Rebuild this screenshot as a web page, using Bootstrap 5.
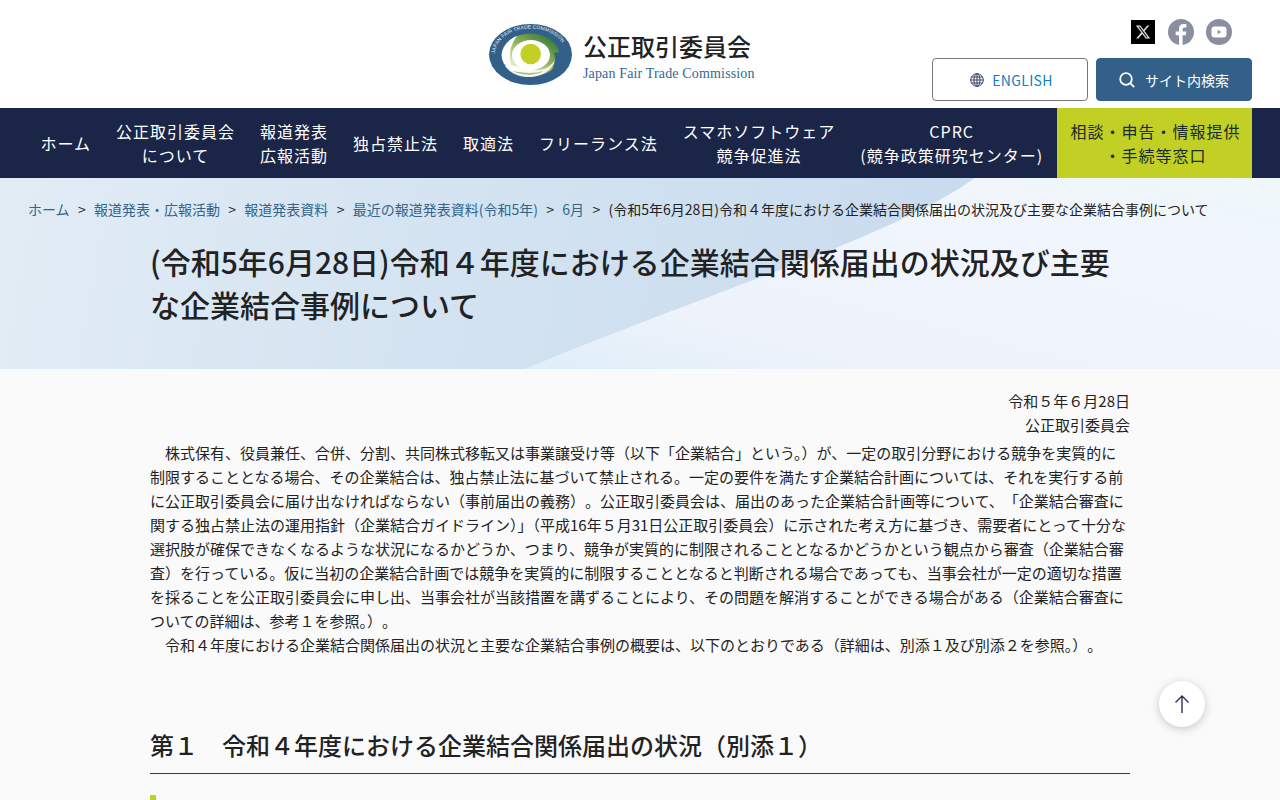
<!DOCTYPE html>
<html lang="ja">
<head>
<meta charset="utf-8">
<title>公正取引委員会</title>
<link rel="stylesheet" href="https://cdn.jsdelivr.net/npm/bootstrap@5.3.0/dist/css/bootstrap.min.css">
<style>
body{font-family:"Noto Sans CJK JP","Noto Sans",sans-serif;background:#fafafa;color:#222;font-size:15px;line-height:24px}
.jf-gap-r{margin-right:.5em}
.jf-gap-l{margin-left:.5em}
.jf-head{height:108px;background:#fff;padding:0 28px 0 489px}
.jf-logo{padding-top:24px;gap:11px;text-decoration:none}
.jf-logo svg{width:83px;height:61px;flex:none}
.jf-logo-ja{font-size:24px;font-weight:500;line-height:30px;color:#222;margin-top:7px}
.jf-logo-en{font-family:"Liberation Serif",serif;font-size:14px;line-height:20px;color:#336699;letter-spacing:.15px;margin-top:3px}
.jf-tools{width:320px}
.jf-social{gap:12px;height:58px;padding-top:18px;padding-right:20px}
.jf-x{margin-right:1px}
.jf-btn{width:156px;height:43px;font-size:14px;border-radius:4px;line-height:20px;padding:0}
.jf-en{border:1px solid #777;color:#0f7fc0;background:#fff;gap:8px;letter-spacing:.3px;padding-left:3px}
.jf-en:hover{border-color:#777;color:#0f7fc0;background:#fff}
.jf-search{background:#336088;border:1px solid #336088;color:#fff;gap:10px}
.jf-search:hover{background:#336088;color:#fff}
.jf-nav{background:#1b2548;height:70px;padding:0 28px}
.jf-nav a{color:#fff;font-size:16px;letter-spacing:1px;line-height:24px;padding:0 12.5px;text-align:center;text-decoration:none;display:flex;align-items:center;white-space:nowrap;flex:none}
.jf-nav a.jf-consult{background:#c2cf24;color:#1d2a2a;width:195px;margin-left:auto;justify-content:center;padding:0 0 0 2px}
.jf-hero{position:relative;height:191px;background:linear-gradient(100deg,#e2ecf5 0%,#d2e2f1 40%,#c8dbee 75%);overflow:hidden}
.jf-curve{position:absolute;left:0;top:0;width:1280px;height:191px}
.jf-crumb{position:relative;padding:19px 28px 0;font-size:14px;line-height:24px;white-space:nowrap}
.jf-crumb .breadcrumb{--bs-breadcrumb-divider:'>';--bs-breadcrumb-divider-color:#222;--bs-breadcrumb-item-active-color:#222;--bs-breadcrumb-margin-bottom:0;--bs-breadcrumb-item-padding-x:8.3px;flex-wrap:nowrap}
.jf-crumb a{color:#33658a;text-decoration:none}
.jf-title{position:relative;width:980px;margin:19px auto 0;font-size:30px;font-weight:500;line-height:43px}
.jf-main{width:980px;margin:0 auto;padding-top:20px}
.jf-main p{margin:0}
.jf-lead{margin-top:4px!important}
.jf-h2{font-size:24px;font-weight:500;line-height:36px;margin:70px 0 21px;padding-bottom:10px;border-bottom:1px solid #2f3f55}
.jf-h3{border-left:6px solid #c2cf24;min-height:30px}
.jf-top{position:fixed;left:1159px;top:681px;width:46px;height:46px;border-radius:50%;background:#fff;box-shadow:0 2px 8px rgba(40,50,80,.25)}
</style>
</head>
<body>
<header class="jf-head d-flex justify-content-between">
  <a href="#" class="jf-logo d-flex align-items-start">
    <svg viewBox="0 0 83 61" role="img" aria-label="公正取引委員会">
      <defs>
        <linearGradient id="jg" x1="0.85" y1="0.1" x2="0.15" y2="0.9"><stop offset="0" stop-color="#3a7a3e"/><stop offset=".45" stop-color="#93b45a"/><stop offset=".8" stop-color="#dde6c2"/><stop offset="1" stop-color="#eef2de"/></linearGradient>
        <path id="jarc" d="M5.900 30.500A35.600 26 0 0 1 77.100 30.500"/>
      </defs>
      <ellipse cx="41.500" cy="30.500" rx="41.500" ry="30.500" fill="#336088"/>
      <ellipse cx="41.500" cy="31" rx="29" ry="21.500" fill="url(#jg)"/>
      <path d="M13 32C13 24 19 15 28 12C23 19 20 26 21 36C22 42 25 45 29 47C20 46 13 40 13 32Z" fill="#fff"/>
      <path d="M16 42C24 40 36 44 48 46C56 46 62 42 66 36C64 46 52 53 40 53C29 53 21 49 16 42Z" fill="#fff" opacity=".85"/>
      <path d="M24 47C33 49 46 50 54 47C48 52 32 52 24 47Z" fill="#a9c080"/>
      <path d="M71 28C72 34 70 41 63 46C66 40 67 34 65 29Z" fill="#336088"/>
      <ellipse cx="42" cy="31" rx="19" ry="15" fill="#fff"/>
      <circle cx="41.700" cy="30" r="10.300" fill="#c2cf24"/>
      <text font-family="Liberation Sans,sans-serif" font-size="5" fill="#e8eef3" letter-spacing=".1"><textPath href="#jarc" startOffset="1">JAPAN FAIR TRADE COMMISSION</textPath></text>
    </svg>
    <span class="d-flex flex-column">
      <span class="jf-logo-ja">公正取引委員会</span>
      <span class="jf-logo-en">Japan Fair Trade Commission</span>
    </span>
  </a>
  <div class="jf-tools">
    <div class="jf-social d-flex justify-content-end align-items-start">
      <a href="#" aria-label="X" class="d-block jf-x"><svg width="24" height="26" viewBox="0 0 24 26"><rect y="1" width="24" height="24" fill="#000"/><path transform="translate(4 5) scale(.667)" d="M18.244 2.25h3.308l-7.227 8.26 8.502 11.24H16.17l-5.214-6.817L4.99 21.75H1.68l7.73-8.835L1.254 2.25H8.08l4.713 6.231zm-1.161 17.52h1.833L7.084 4.126H5.117z" fill="#ddd"/></svg></a>
      <a href="#" aria-label="Facebook" class="d-block"><svg width="26" height="26" viewBox="0 0 26 26"><circle cx="13" cy="13" r="13" fill="#8a8f9f"/><path d="M14.6 26V16.300h3.100l.6-3.700h-3.700v-2.200c0-1.100.5-1.900 2-1.900h1.800V5.200c-.7-.1-1.700-.2-2.700-.2-3 0-4.700 1.700-4.700 4.800v2.800H7.700v3.700H11V26z" fill="#fff"/></svg></a>
      <a href="#" aria-label="YouTube" class="d-block"><svg width="26" height="26" viewBox="0 0 26 26"><circle cx="13" cy="13" r="13" fill="#8a8f9f"/><rect x="5.500" y="7.500" width="15" height="11" rx="3" fill="#fff"/><path d="M11.600 10.800v4.400l3.700-2.200z" fill="#8a8f9f"/></svg></a>
    </div>
    <div class="d-flex gap-2">
      <a href="#" class="btn jf-btn jf-en d-flex align-items-center justify-content-center">
        <svg width="14" height="14" viewBox="0 0 14 14" fill="none" stroke="#3a4468" stroke-width="1"><circle cx="7" cy="7" r="6.300"/><ellipse cx="7" cy="7" rx="3" ry="6.300"/><path d="M7 .7v12.600M.7 7h12.600M1.500 4h11M1.500 10h11"/></svg>
        <span>ENGLISH</span>
      </a>
      <a href="#" class="btn jf-btn jf-search d-flex align-items-center justify-content-center">
        <svg width="16" height="16" viewBox="0 0 16 16" fill="none" stroke="#fff" stroke-width="1.800"><circle cx="7" cy="7" r="5.800"/><path d="m11.200 11.200 4 4"/></svg>
        <span>サイト内検索</span>
      </a>
    </div>
  </div>
</header>
<nav class="jf-nav d-flex align-items-stretch">
  <a href="#">ホーム</a>
  <a href="#">公正取引委員会<br>について</a>
  <a href="#">報道発表<br>広報活動</a>
  <a href="#">独占禁止法</a>
  <a href="#">取適法</a>
  <a href="#">フリーランス法</a>
  <a href="#">スマホソフトウェア<br>競争促進法</a>
  <a href="#">CPRC<br>(競争政策研究センター)</a>
  <a href="#" class="jf-consult">相談・申告・情報提供<br>・手続等窓口</a>
</nav>
<section class="jf-hero">
  <svg class="jf-curve" viewBox="0 0 1280 191" preserveAspectRatio="none" aria-hidden="true">
    <defs><linearGradient id="jr" x1="0" y1="1" x2="1" y2="0"><stop offset="0" stop-color="#dfeef8"/><stop offset=".25" stop-color="#eef3fb"/><stop offset=".7" stop-color="#f1f5fd"/><stop offset="1" stop-color="#eef7fa"/></linearGradient></defs>
    <path d="M975 0C890 60 720 110 525 191H1280V0Z" fill="url(#jr)"/>
  </svg>
  <div class="jf-crumb">
    <ol class="breadcrumb">
      <li class="breadcrumb-item"><a href="#">ホーム</a></li>
      <li class="breadcrumb-item"><a href="#">報道発表・広報活動</a></li>
      <li class="breadcrumb-item"><a href="#">報道発表資料</a></li>
      <li class="breadcrumb-item"><a href="#">最近の報道発表資料(令和5年)</a></li>
      <li class="breadcrumb-item"><a href="#">6月</a></li>
      <li class="breadcrumb-item active">(令和5年6月28日)令和４年度における企業結合関係届出の状況及び主要な企業結合事例について</li>
    </ol>
  </div>
  <h1 class="jf-title">(令和5年6月28日)令和４年度における企業結合関係届出の状況及び主要な企業結合事例について</h1>
</section>
<main class="jf-main">
  <div class="text-end">令和５年６月28日<br>公正取引委員会</div>
  <p class="jf-lead">　株式保有、役員兼任、合併、分割、共同株式移転又は事業譲受け等（以下「企業結合」という。）が、一定の取引分野における競争を実質的に制限することとなる場合、その企業結合は、独占禁止法に基づいて禁止される。一定の要件を満たす企業結合計画については、それを実行する前に公正取引委員会に届け出なければならない（事前届出の義務）<span class="jf-gap-l">。</span>公正取引委員会は、届出のあった企業結合計画等について<span class="jf-gap-r">、</span>「企業結合審査に関する独占禁止法の運用指針（企業結合ガイドライン）」（平成16年５月31日公正取引委員会）に示された考え方に基づき、需要者にとって十分な選択肢が確保できなくなるような状況になるかどうか、つまり、競争が実質的に制限されることとなるかどうかという観点から審査（企業結合審査）を行っている。仮に当初の企業結合計画では競争を実質的に制限することとなると判断される場合であっても、当事会社が一定の適切な措置を採ることを公正取引委員会に申し出、当事会社が当該措置を講ずることにより、その問題を解消することができる場合がある（企業結合審査についての詳細は、参考１を参照。）<span class="jf-gap-l">。</span></p>
  <p>　令和４年度における企業結合関係届出の状況と主要な企業結合事例の概要は、以下のとおりである（詳細は、別添１及び別添２を参照。）<span class="jf-gap-l">。</span></p>
  <h2 class="jf-h2">第１　令和４年度における企業結合関係届出の状況（別添１）</h2>
  <div class="jf-h3"></div>
</main>
<a href="#" class="jf-top d-flex align-items-center justify-content-center" aria-label="ページトップ">
  <svg width="16" height="20" viewBox="0 0 16 20" fill="none" stroke="#2a3358" stroke-width="1.400"><path d="M8 19V2M1.500 8.500 8 2l6.500 6.500"/></svg>
</a>
<script src="https://cdn.jsdelivr.net/npm/bootstrap@5.3.0/dist/js/bootstrap.bundle.min.js"></script>
</body>
</html>
